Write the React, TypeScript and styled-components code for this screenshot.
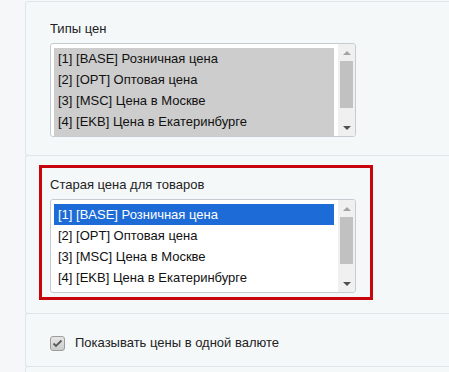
import React from 'react'
import styled, { createGlobalStyle } from 'styled-components'

const GlobalStyle = createGlobalStyle`
  html, body {
    margin: 0;
    padding: 0;
    background: #f5f7f8;
    overflow: hidden;
  }
  body {
    font-family: 'Liberation Sans', Arial, sans-serif;
    font-size: 13px;
    color: #222;
  }
`

const Page = styled.div`
  display: flex;
  flex-direction: column;
  padding: 1px 0 0 25px;
  width: 449px;
  height: 372px;
  box-sizing: border-box;
  overflow: hidden;
`

const Panel = styled.section<{ $compact?: boolean }>`
  background: #f5f8f9;
  border: 1px solid #dfe6ea;
  border-right: none;
  border-radius: 3px 0 0 3px;
  margin-top: -1px;
  padding: ${(p) => (p.$compact ? '21px 24px 15px' : '19px 24px 18px')};
  flex-shrink: 0;

  &:first-child {
    margin-top: 0;
  }
`

const EmptyPanel = styled(Panel)`
  flex: 1;
  padding: 0;
  border-bottom: none;
  border-radius: 3px 0 0 0;
`

const Highlight = styled.div`
  border: 3px solid #c8040c;
  padding: 9px 14px 4px 8px;
  margin: -10px -17px -5px -11px;
  width: 306px;
`

const Label = styled.div`
  line-height: 16px;
  margin-bottom: 6px;
  color: #222;
`

const ListBox = styled.div`
  display: flex;
  width: 306px;
  height: 94px;
  box-sizing: border-box;
  border: 1px solid #c4ccd1;
  border-radius: 3px;
  background: #fff;
  padding-left: 3px;
  overflow: hidden;
`

const Options = styled.div<{ $dimmed?: boolean }>`
  width: 280px;
  margin: 4px 4px 0 0;
  background: ${(p) => (p.$dimmed ? '#cdcdcd' : 'transparent')};
  overflow: hidden;
`

const Option = styled.div<{ $active?: boolean }>`
  height: 21px;
  line-height: 21px;
  padding-left: 4px;
  white-space: nowrap;
  background: ${(p) => (p.$active ? '#1d6bd6' : 'transparent')};
  color: ${(p) => (p.$active ? '#fff' : '#111')};
`

const Scrollbar = styled.div`
  width: 17px;
  display: flex;
  flex-direction: column;
  background: #f0f0f0;
`

const ArrowButton = styled.div`
  height: 17px;
  display: flex;
  align-items: center;
  justify-content: center;
`

const Arrow = styled.div<{ $dir: 'up' | 'down' }>`
  width: 0;
  height: 0;
  border-left: 4px solid transparent;
  border-right: 4px solid transparent;
  ${(p) =>
    p.$dir === 'up'
      ? 'border-bottom: 4px solid #a3a3a3;'
      : 'border-top: 4px solid #505050;'}
`

const Track = styled.div`
  flex: 1;
  padding: 0 2px;
`

const Thumb = styled.div`
  height: 47px;
  background: #c1c1c1;
`

const CheckRow = styled.label`
  display: flex;
  align-items: center;
  gap: 10px;
  line-height: 16px;
`

const CheckBox = styled.span`
  width: 15px;
  height: 15px;
  box-sizing: border-box;
  border: 1px solid #9c9c9c;
  border-radius: 3px;
  background: linear-gradient(#e6e6e6, #cbcbcb);
  display: flex;
  align-items: center;
  justify-content: center;
`

const priceTypes = [
  '[1] [BASE] Розничная цена',
  '[2] [OPT] Оптовая цена',
  '[3] [MSC] Цена в Москве',
  '[4] [EKB] Цена в Екатеринбурге',
]

type ListProps = {
  items: string[]
  dimmed?: boolean
  activeIndex?: number
}

const PriceList: React.FC<ListProps> = ({ items, dimmed, activeIndex }) => (
  <ListBox>
    <Options $dimmed={dimmed}>
      {items.map((item, i) => (
        <Option key={item} $active={i === activeIndex}>
          {item}
        </Option>
      ))}
    </Options>
    <Scrollbar>
      <ArrowButton>
        <Arrow $dir="up" />
      </ArrowButton>
      <Track>
        <Thumb />
      </Track>
      <ArrowButton>
        <Arrow $dir="down" />
      </ArrowButton>
    </Scrollbar>
  </ListBox>
)

const App: React.FC = () => {
  return (
    <>
      <GlobalStyle />
      <Page>
        <Panel>
          <Label>Типы цен</Label>
          <PriceList items={priceTypes} dimmed />
        </Panel>

        <Panel>
          <Highlight>
            <Label>Старая цена для товаров</Label>
            <PriceList items={priceTypes} activeIndex={0} />
          </Highlight>
        </Panel>

        <Panel $compact>
          <CheckRow>
            <CheckBox>
              <svg width="11" height="9" viewBox="0 0 11 9">
                <path d="M1.5 4.5 L4 7 L9.5 1.5" fill="none" stroke="#5a5a5a" strokeWidth="1.8" />
              </svg>
            </CheckBox>
            Показывать цены в одной валюте
          </CheckRow>
        </Panel>

        <EmptyPanel />
      </Page>
    </>
  )
}

export default App
